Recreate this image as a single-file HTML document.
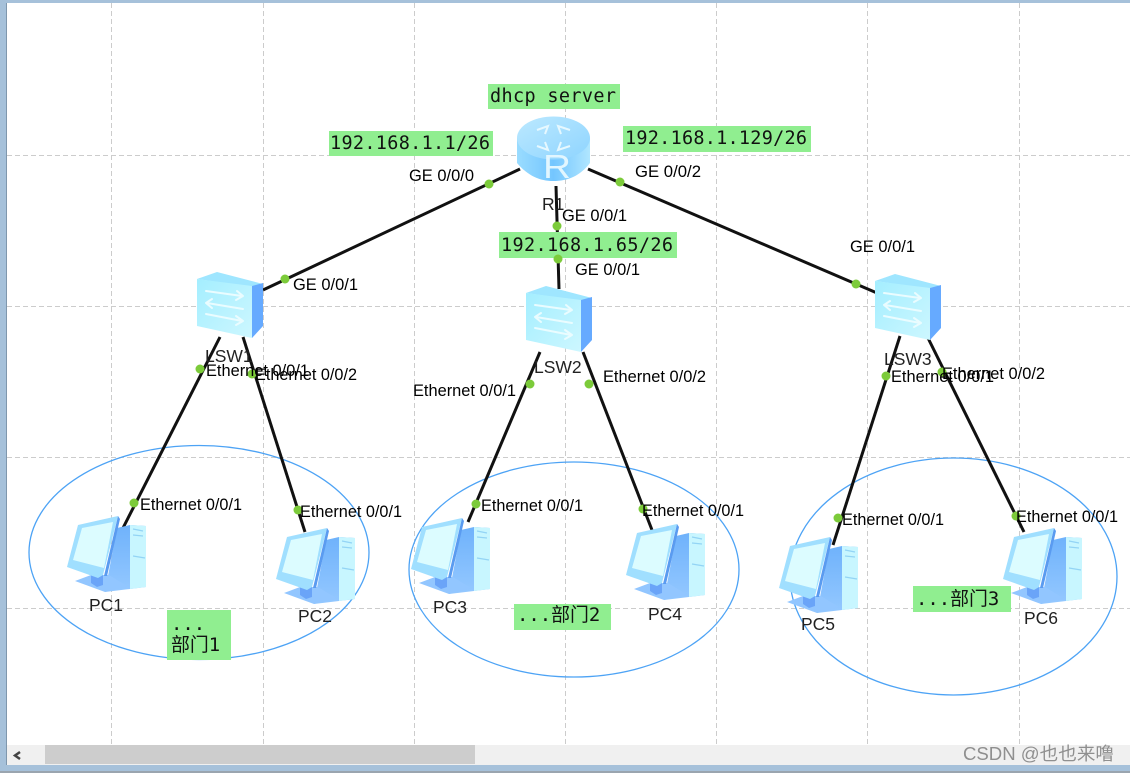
<!DOCTYPE html>
<html><head><meta charset="utf-8"><style>
html,body{margin:0;padding:0;background:#fff;width:1130px;height:773px;overflow:hidden}
svg{display:block;filter:blur(.35px)}
.t{font-family:"Liberation Sans",sans-serif;font-size:16.3px;fill:#000}
.n{font-family:"Liberation Sans",sans-serif;font-size:17.5px;fill:#222}
.m{font-family:"DejaVu Sans Mono","Liberation Mono",monospace;font-size:18.5px;fill:#111}
.c{font-family:"DejaVu Sans Mono","Noto Sans CJK SC",monospace;font-size:18.9px;fill:#111}
</style></head><body>
<svg width="1130" height="773" viewBox="0 0 1130 773" xmlns="http://www.w3.org/2000/svg">
<defs>
<linearGradient id="rb" x1="0" x2="1" y1="0" y2="0"><stop offset="0" stop-color="#9adcff"/><stop offset=".5" stop-color="#74c6ff"/><stop offset="1" stop-color="#b0e6ff"/></linearGradient>
<linearGradient id="rt" x1="0" x2="1" y1="0" y2="1"><stop offset="0" stop-color="#bce9ff"/><stop offset="1" stop-color="#8ed4ff"/></linearGradient>
<linearGradient id="sf" x1="0" x2="1" y1="0" y2="1"><stop offset="0" stop-color="#a4eeff"/><stop offset="1" stop-color="#cdf7ff"/></linearGradient>
<linearGradient id="pt" x1="0" x2="0" y1="0" y2="1"><stop offset="0" stop-color="#6fb2fb"/><stop offset="1" stop-color="#94c8ff"/></linearGradient>
<g id="sw">
<path d="M0 7L20 0L66 12L55 15Z" fill="#9fe6ff"/>
<path d="M0 7L55 14V66L0 54Z" fill="url(#sf)"/>
<path d="M55 14L66 11V54L55 66Z" fill="#66aaff"/>
<g fill="none" stroke="#eafcff" stroke-width="2" stroke-linecap="round" stroke-linejoin="round">
<path d="M9 19L45 24M40 19L46 24L39 28"/>
<path d="M46 37L10 31M15 27L9 31L15 36"/>
<path d="M9 42L45 49M39 44L46 49L39 53"/>
</g>
</g>
<g id="pc">
<path d="M50 12L63 9L79 10V71L63 73L38 76Z" fill="url(#pt)"/>
<path d="M63 9L79 10V71L63 73Z" fill="#c8f6ff"/>
<path d="M66 13L76 15M66 19L76 20M66 40L78 42" stroke="#93d4f5" stroke-width="1.200"/>
<path d="M8 65L24 59L42 59L60 70L38 76Z" fill="#92c6ff"/>
<path d="M24 59H36V69L30 71L24 67Z" fill="#6aa4f8"/>
<path d="M0 51L11 9L51 0L36 59L31 62Z" fill="#a0dfff"/>
<path d="M6 44L15 12L46 6L37 52Z" fill="#dcfcff"/>
<path d="M51 0L37 60L40 60L53 3Z" fill="#5a9bf0"/>
</g>
</defs>
<rect width="1130" height="773" fill="#fff"/>
<g stroke="#cccccc" stroke-width="1" stroke-dasharray="5 3" fill="none">
<path d="M111.500 3V745M263.500 3V745M414.500 3V745M565.500 3V745M716.500 3V745M867.500 3V745M1019.500 3V745"/>
<path d="M7 155.500H1130M7 306.500H1130M7 457.500H1130M7 608.500H1130"/>
</g>
<g fill="none" stroke="#4da3f5" stroke-width="1.300">
<ellipse cx="199" cy="552.500" rx="170" ry="107"/>
<ellipse cx="574" cy="569.500" rx="165" ry="107.500"/>
<ellipse cx="953.500" cy="576.500" rx="163.500" ry="118.500"/>
</g>
<g stroke="#111" stroke-width="3" fill="none">
<path d="M520 169L263 290"/>
<path d="M556 186L559 289"/>
<path d="M588 169L877 293"/>
<path d="M220 337L123 528"/>
<path d="M243 337L305 532"/>
<path d="M540 352L468 522"/>
<path d="M583 352L652 530"/>
<path d="M900 336L833 545"/>
<path d="M928 338L1024 532"/>
</g>
<!-- router -->
<path d="M517 138V163C528 176 540 181 553 181C568 181 580 176 590 163V138Z" fill="url(#rb)"/>
<ellipse cx="553.500" cy="138" rx="36.500" ry="21.500" fill="url(#rt)"/>
<g fill="none" stroke="#e6f8ff" stroke-width="2"><path d="M537 130L548 126L545 134M570 130L558 126L561 134M537 146L548 150L545 142M570 146L558 150L561 142"/></g>
<text x="543" y="178" font-family="Liberation Sans,sans-serif" font-size="33" fill="#e2f6ff" textLength="28" lengthAdjust="spacingAndGlyphs">R</text>
<use href="#sw" x="197" y="272"/>
<use href="#sw" x="526" y="286"/>
<use href="#sw" x="875" y="274"/>
<use href="#pc" x="67" y="516"/>
<use href="#pc" x="276" y="528"/>
<use href="#pc" x="411" y="518"/>
<use href="#pc" x="626" y="524"/>
<use href="#pc" x="779" y="537"/>
<use href="#pc" x="1003" y="528"/>
<!-- green labels -->
<g fill="#90ee90">
<rect x="488" y="84" width="132" height="25"/>
<rect x="329" y="131" width="164" height="25"/>
<rect x="623" y="126" width="188" height="26"/>
<rect x="499" y="232" width="178" height="26"/>
<rect x="167" y="610" width="64" height="50"/>
<rect x="514" y="604" width="97" height="26"/>
<rect x="913" y="586" width="98" height="26"/>
</g>
<text class="m" x="490" y="102" textLength="126">dhcp server</text>
<text class="m" x="330" y="149" textLength="160">192.168.1.1/26</text>
<text class="m" x="625" y="144" textLength="182">192.168.1.129/26</text>
<text class="m" x="501" y="251" textLength="172">192.168.1.65/26</text>
<text class="c" x="171" y="630">...</text>
<text class="c" x="171" y="651">部门1</text>
<text class="c" x="517" y="621">...部门2</text>
<text class="c" x="916" y="605">...部门3</text>
<g fill="#7ccb3a">
<circle cx="489" cy="184" r="4.500"/><circle cx="285" cy="279" r="4.500"/>
<circle cx="557" cy="226" r="4.500"/><circle cx="558" cy="259" r="4.500"/>
<circle cx="620" cy="182" r="4.500"/><circle cx="856" cy="284" r="4.500"/>
<circle cx="200" cy="369" r="4.500"/><circle cx="134" cy="503" r="4.500"/>
<circle cx="252" cy="374" r="4.500"/><circle cx="298" cy="510" r="4.500"/>
<circle cx="530" cy="384" r="4.500"/><circle cx="476" cy="504" r="4.500"/>
<circle cx="589" cy="384" r="4.500"/><circle cx="643" cy="509" r="4.500"/>
<circle cx="886" cy="376" r="4.500"/><circle cx="838" cy="518" r="4.500"/>
<circle cx="942" cy="372" r="4.500"/><circle cx="1016" cy="516" r="4.500"/>
</g>
<g>
<text class="t" x="409" y="181" textLength="65" lengthAdjust="spacingAndGlyphs">GE 0/0/0</text>
<text class="t" x="635" y="177" textLength="66" lengthAdjust="spacingAndGlyphs">GE 0/0/2</text>
<text class="t" x="562" y="221" textLength="65" lengthAdjust="spacingAndGlyphs">GE 0/0/1</text>
<text class="t" x="575" y="275" textLength="65" lengthAdjust="spacingAndGlyphs">GE 0/0/1</text>
<text class="t" x="293" y="290" textLength="65" lengthAdjust="spacingAndGlyphs">GE 0/0/1</text>
<text class="t" x="850" y="252" textLength="65" lengthAdjust="spacingAndGlyphs">GE 0/0/1</text>
<text class="t" x="206" y="376" textLength="103" lengthAdjust="spacingAndGlyphs">Ethernet 0/0/1</text>
<text class="t" x="255" y="380" textLength="102" lengthAdjust="spacingAndGlyphs">Ethernet 0/0/2</text>
<text class="t" x="413" y="396" textLength="103" lengthAdjust="spacingAndGlyphs">Ethernet 0/0/1</text>
<text class="t" x="603" y="382" textLength="103" lengthAdjust="spacingAndGlyphs">Ethernet 0/0/2</text>
<text class="t" x="891" y="382" textLength="103" lengthAdjust="spacingAndGlyphs">Ethernet 0/0/1</text>
<text class="t" x="942" y="379" textLength="103" lengthAdjust="spacingAndGlyphs">Ethernet 0/0/2</text>
<text class="t" x="140" y="510" textLength="102" lengthAdjust="spacingAndGlyphs">Ethernet 0/0/1</text>
<text class="t" x="300" y="517" textLength="102" lengthAdjust="spacingAndGlyphs">Ethernet 0/0/1</text>
<text class="t" x="481" y="511" textLength="102" lengthAdjust="spacingAndGlyphs">Ethernet 0/0/1</text>
<text class="t" x="642" y="516" textLength="102" lengthAdjust="spacingAndGlyphs">Ethernet 0/0/1</text>
<text class="t" x="842" y="525" textLength="102" lengthAdjust="spacingAndGlyphs">Ethernet 0/0/1</text>
<text class="t" x="1016" y="522" textLength="102" lengthAdjust="spacingAndGlyphs">Ethernet 0/0/1</text>
</g>
<text class="n" x="542" y="210">R1</text>
<text class="n" x="205" y="362">LSW1</text>
<text class="n" x="534" y="373">LSW2</text>
<text class="n" x="884" y="365">LSW3</text>
<text class="n" x="89" y="611">PC1</text>
<text class="n" x="298" y="622">PC2</text>
<text class="n" x="433" y="613">PC3</text>
<text class="n" x="648" y="620">PC4</text>
<text class="n" x="801" y="630">PC5</text>
<text class="n" x="1024" y="624">PC6</text>
<!-- frame & scrollbar -->
<rect x="7" y="745" width="1123" height="20" fill="#f0f0f0"/>
<rect x="45" y="745" width="430" height="19" fill="#cdcdcd"/>
<path d="M20 752L15 755.500L20 759" fill="none" stroke="#444" stroke-width="2.500"/>
<rect x="0" y="0" width="1130" height="3" fill="#a6c1da"/>
<rect x="0" y="0" width="6" height="773" fill="#a6c1da"/>
<rect x="6" y="3" width="1" height="763" fill="#7f97ad"/>
<rect x="0" y="765" width="1130" height="6" fill="#a6c1da"/>
<rect x="0" y="771" width="1130" height="2" fill="#9aa5af"/>
<text x="963" y="760" font-family="'Liberation Sans','Noto Sans CJK SC',sans-serif" font-size="18" fill="#8f8f8f" textLength="151" lengthAdjust="spacingAndGlyphs">CSDN @也也来噜</text>
</svg>
</body></html>
